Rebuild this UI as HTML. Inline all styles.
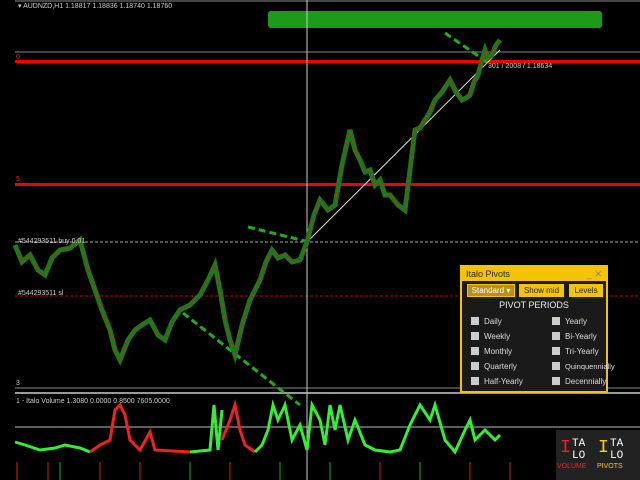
<!DOCTYPE html><html><head><style>
body{margin:0;background:#000;width:640px;height:480px;overflow:hidden;font-family:"Liberation Sans",sans-serif;position:relative}
.t{position:absolute;color:#ccc;font-size:7px;white-space:nowrap}
#p{position:absolute;left:460px;top:265px;width:144px;height:124px;background:#1a1a1a;border:2px solid #f5c400;box-sizing:content-box}
#p .h{background:#f5c400;height:14px;color:#222;font-size:9px;padding:2px 0 0 4px;box-sizing:border-box}
.b{position:absolute;top:17px;height:13px;font-size:8px;text-align:center;line-height:12px;border:1px solid #f5c400;box-sizing:border-box;white-space:nowrap}
.c{position:absolute;font-size:8px;color:#ddd;white-space:nowrap}
.c i{display:inline-block;width:8px;height:8px;background:#ccc;margin-right:5px;vertical-align:-1px}
</style></head><body>
<svg width="640" height="480" style="position:absolute;left:0;top:0">
<line x1="15" y1="1" x2="640" y2="1" stroke="#888"/>
<line x1="15" y1="52" x2="640" y2="52" stroke="#888"/>
<rect x="268" y="11" width="334" height="17" rx="3" fill="#1a9c1a"/>
<rect x="15" y="60" width="625" height="3" fill="#e00"/>
<rect x="15" y="183" width="625" height="3" fill="#e00"/>
<line x1="15" y1="242" x2="640" y2="242" stroke="#aaa" stroke-dasharray="3,2"/>
<line x1="15" y1="296" x2="640" y2="296" stroke="#b00" stroke-dasharray="3,2"/>
<line x1="15" y1="388" x2="640" y2="388" stroke="#888"/>
<line x1="15" y1="393" x2="640" y2="393" stroke="#999" stroke-width="2"/>
<line x1="15" y1="427" x2="640" y2="427" stroke="#bbb"/>
<line x1="307" y1="0" x2="307" y2="480" stroke="#ccc"/>
<line x1="307" y1="242" x2="500" y2="50" stroke="#ddd"/>
<g stroke="#2a2" stroke-width="3" stroke-dasharray="7,4" fill="none">
<line x1="445" y1="33" x2="487" y2="62"/><line x1="248" y1="227" x2="305" y2="241"/><line x1="183" y1="313" x2="300" y2="405"/></g>
<polyline fill="none" stroke="#1a7a1a" stroke-width="5" points="15,245 22,262 30,255 38,270 45,275 52,258 60,250 70,248 80,240 88,270 95,290 102,310 110,330 115,350 120,360 128,340 135,330 142,325 150,320 158,335 165,340 172,322 180,310 190,305 200,295 208,280 215,265 220,290 225,320 230,340 235,355 242,325 250,300 255,290 260,280 266,262 272,250 278,258 285,255 292,262 300,260 307,242 314,215 320,200 328,210 335,205 342,165 350,130 355,150 360,160 365,172 370,170 375,185 380,180 385,195 390,195 398,205 405,210 410,170 415,130 420,128 425,120 430,112 435,100 442,92 450,80 456,92 462,100 466,98 470,95 474,82 478,75 482,60 485,50 488,58 492,55 496,45 500,40"/>
<polyline fill="none" stroke="#c22" stroke-width="1.5" stroke-dasharray="2,4" points="15,245 22,262 30,255 38,270 45,275 52,258 60,250 70,248 80,240 88,270 95,290 102,310 110,330 115,350 120,360 128,340 135,330 142,325 150,320 158,335 165,340 172,322 180,310 190,305 200,295 208,280 215,265 220,290 225,320 230,340 235,355 242,325 250,300 255,290 260,280 266,262 272,250 278,258 285,255 292,262 300,260 307,242 314,215 320,200 328,210 335,205 342,165 350,130 355,150 360,160 365,172 370,170 375,185 380,180 385,195 390,195 398,205 405,210 410,170 415,130 420,128 425,120 430,112 435,100 442,92 450,80 456,92 462,100 466,98 470,95 474,82 478,75 482,60 485,50 488,58 492,55 496,45 500,40"/>
<polyline fill="none" stroke="#3e3" stroke-width="3" points="15,442 25,445 40,450 55,448 65,445 80,448 90,452"/>
<polyline fill="none" stroke="#e22" stroke-width="3" points="90,452 100,445 110,440 115,410 120,405 125,415 130,440 140,450 150,432 155,450 190,452"/>
<polyline fill="none" stroke="#3e3" stroke-width="3" points="190,452 210,450 214,405 218,450 222,410"/>
<polyline fill="none" stroke="#e22" stroke-width="3" points="222,440 230,420 235,405 240,430 245,445 255,452"/>
<polyline fill="none" stroke="#3e3" stroke-width="3" points="255,452 262,445 268,430 273,405 278,420 285,405 292,440 300,425 307,450 312,405 320,420 325,445 330,405 335,430 340,405 348,440 355,420 365,445 375,450 390,452 400,450 410,425 420,405 430,420 435,405 445,440 455,452 465,430 470,420 475,440 485,430 495,440 500,435"/>
<g stroke-width="1"><line x1="17" y1="462" x2="17" y2="480" stroke="#c22"/><line x1="48" y1="462" x2="48" y2="480" stroke="#c22"/><line x1="60" y1="462" x2="60" y2="480" stroke="#2a2"/><line x1="100" y1="462" x2="100" y2="480" stroke="#c22"/><line x1="140" y1="462" x2="140" y2="480" stroke="#c22"/><line x1="190" y1="462" x2="190" y2="480" stroke="#2a2"/><line x1="230" y1="462" x2="230" y2="480" stroke="#c22"/><line x1="280" y1="462" x2="280" y2="480" stroke="#2a2"/><line x1="330" y1="462" x2="330" y2="480" stroke="#2a2"/><line x1="380" y1="462" x2="380" y2="480" stroke="#c22"/><line x1="420" y1="462" x2="420" y2="480" stroke="#2a2"/><line x1="470" y1="462" x2="470" y2="480" stroke="#c22"/><line x1="510" y1="462" x2="510" y2="480" stroke="#c22"/></g>
<rect x="556" y="430" width="84" height="50" fill="#222"/>
<text x="560" y="452" fill="#e22" font-size="18" font-family="Liberation Mono">I</text><text x="572" y="446" fill="#fff" font-size="11" font-family="Liberation Mono">TA</text><text x="572" y="458" fill="#fff" font-size="11" font-family="Liberation Mono">LO</text>
<text x="598" y="452" fill="#fc0" font-size="18" font-family="Liberation Mono">I</text><text x="610" y="446" fill="#fff" font-size="11" font-family="Liberation Mono">TA</text><text x="610" y="458" fill="#fff" font-size="11" font-family="Liberation Mono">LO</text>
<text x="557" y="468" fill="#e22" font-size="7">VOLUME</text><text x="597" y="468" fill="#fc0" font-size="7">PIVOTS</text>
</svg>
<div class="t" style="left:18px;top:2px">▾ AUDNZD,H1  1.18817 1.18836 1.18740 1.18760</div>
<div class="t" style="left:16px;top:54px;color:#e22">0</div>
<div class="t" style="left:16px;top:176px;color:#e22">5</div>
<div class="t" style="left:16px;top:380px">3</div>
<div class="t" style="left:18px;top:238px">#544293511 buy 0.01</div>
<div class="t" style="left:18px;top:290px">#544293511 sl</div>
<div class="t" style="left:488px;top:63px">301 / 2008 / 1.18634</div>
<div class="t" style="left:16px;top:398px">1 - Italo Volume 1.3080 0.0000 0.8500 7605.0000</div>
<div id="p"><div class="h">Italo Pivots<span style="float:right;margin-right:4px;color:#888">_ ✕</span></div>
<div class="b" style="left:5px;width:48px;background:#b8901a;color:#fff">Standard ▾</div>
<div class="b" style="left:57px;width:45px;background:#f5c400;color:#222">Show mid</div>
<div class="b" style="left:107px;width:34px;background:#f5c400;color:#222">Levels</div>
<div style="position:absolute;top:33px;width:100%;text-align:center;color:#eee;font-size:9px">PIVOT PERIODS</div>
<div class="c" style="left:9px;top:50px"><i></i>Daily</div><div class="c" style="left:9px;top:65px"><i></i>Weekly</div><div class="c" style="left:9px;top:80px"><i></i>Monthly</div><div class="c" style="left:9px;top:95px"><i></i>Quarterly</div><div class="c" style="left:9px;top:110px"><i></i>Half-Yearly</div>
<div class="c" style="left:90px;top:50px"><i></i>Yearly</div><div class="c" style="left:90px;top:65px"><i></i>Bi-Yearly</div><div class="c" style="left:90px;top:80px"><i></i>Tri-Yearly</div><div class="c" style="left:90px;top:95px;font-size:7.5px"><i></i>Quinquennially</div><div class="c" style="left:90px;top:110px"><i></i>Decennially</div>
</div>
</body></html>
